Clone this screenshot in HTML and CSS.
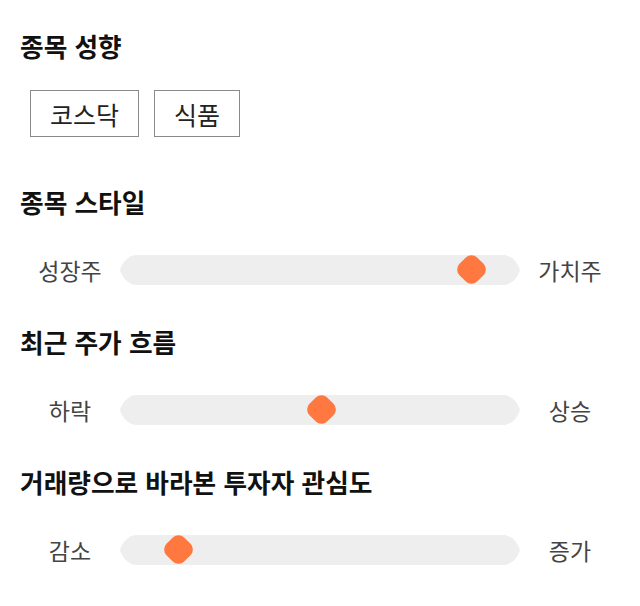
FILE: index.html
```html
<!DOCTYPE html>
<html lang="ko">
<head>
    <meta charset="UTF-8">
    <meta name="viewport" content="width=device-width, initial-scale=1.0">
    <title>종목 성향</title>
    <link rel="stylesheet" href="styles.css">
</head>
<body>
    <div class="container">
        <section class="section section-tags">
            <h2>종목 성향</h2>
            <div class="tags">
                <span class="tag">코스닥</span>
                <span class="tag">식품</span>
            </div>
        </section>

        <section class="section">
            <h2>종목 스타일</h2>
            <div class="slider-row">
                <span class="label">성장주</span>
                <div class="track">
                    <div class="thumb" style="left: 87.75%"></div>
                </div>
                <span class="label">가치주</span>
            </div>
        </section>

        <section class="section">
            <h2>최근 주가 흐름</h2>
            <div class="slider-row">
                <span class="label">하락</span>
                <div class="track">
                    <div class="thumb" style="left: 50.25%"></div>
                </div>
                <span class="label">상승</span>
            </div>
        </section>

        <section class="section">
            <h2>거래량으로 바라본 투자자 관심도</h2>
            <div class="slider-row">
                <span class="label">감소</span>
                <div class="track">
                    <div class="thumb" style="left: 14.5%"></div>
                </div>
                <span class="label">증가</span>
            </div>
        </section>
    </div>
</body>
</html>
```

FILE: styles.css
```css
body {
    margin: 0;
    background: #ffffff;
    color: #111111;
    font-family: "Noto Sans CJK KR", "Noto Sans", sans-serif;
}

.container {
    padding: 30px 20px;
}

.section {
    margin-bottom: 32px;
}

.section-tags {
    margin-bottom: 49px;
}

h2 {
    margin: 0 0 28px;
    height: 32px;
    font-size: 25.7px;
    line-height: 32px;
    font-weight: 700;
}

/* Tags */
.tags {
    display: flex;
    gap: 15px;
    padding-left: 10px;
}

.tag {
    display: flex;
    align-items: center;
    height: 45px;
    padding: 0 19px;
    border: 1px solid #8a8a8a;
    font-size: 25px;
    color: #222222;
}

/* Sliders */
.slider-row {
    display: flex;
    align-items: center;
    height: 48px;
}

.label {
    width: 100px;
    text-align: center;
    font-size: 23px;
    color: #444444;
}

.track {
    position: relative;
    width: 400px;
    height: 30px;
    background: #eeeeee;
    clip-path: path("M17,0 H383 C392,0 398,8 400,15 C398,22 392,30 383,30 H17 C8,30 2,22 0,15 C2,8 8,0 17,0 Z");
}

.thumb {
    position: absolute;
    top: 2px;
    width: 25px;
    height: 25px;
    margin-left: -12.5px;
    background: #ff7840;
    border-radius: 8px;
    transform: rotate(45deg);
}
```
